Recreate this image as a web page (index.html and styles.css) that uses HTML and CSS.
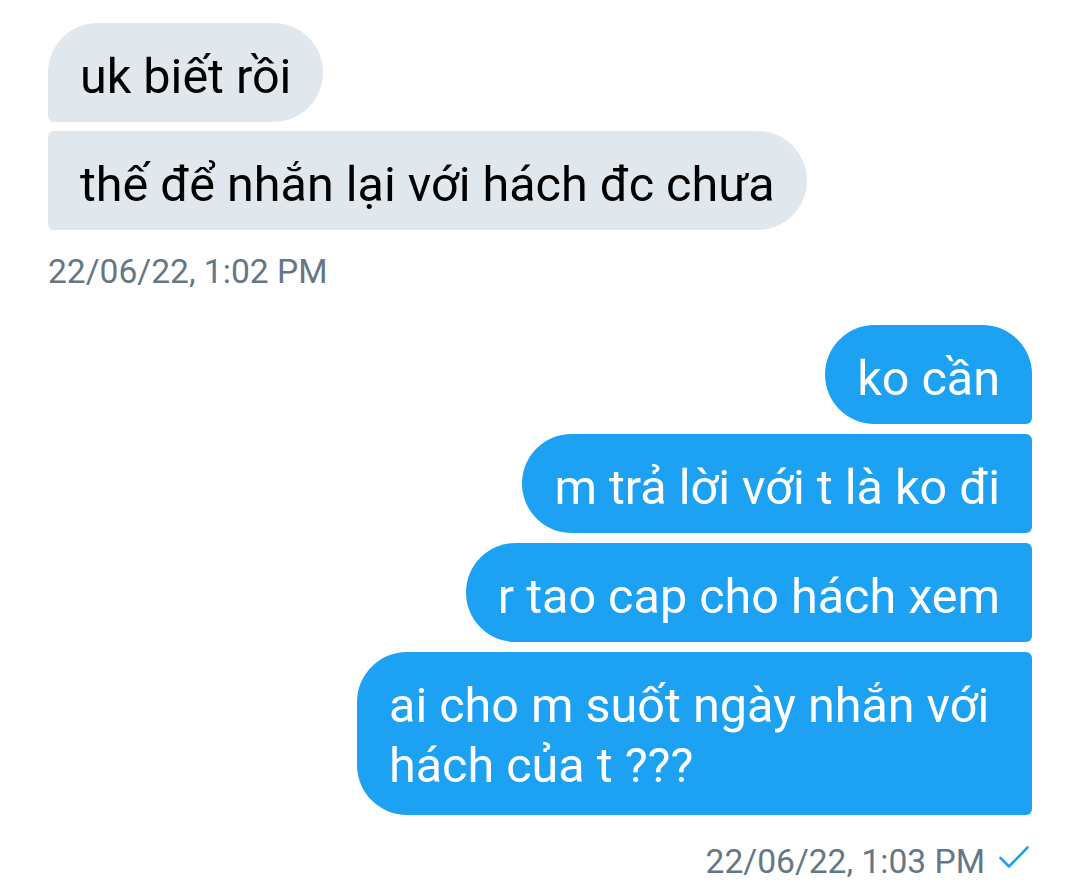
FILE: index.html
```html
<!DOCTYPE html>
<html lang="vi">
<head>
<meta charset="utf-8">
<link rel="stylesheet" href="styles.css">
</head>
<body>
<div class="chat">
  <div class="group group-in">
    <div class="bubble in first">uk biết rồi</div>
    <div class="bubble in last">thế để nhắn lại với hách đc chưa</div>
    <div class="stamp stamp-in">22/06/22, 1:02 PM</div>
  </div>
  <div class="group group-out">
    <div class="bubble out first">ko cần</div>
    <div class="bubble out mid">m trả lời với t là ko đi</div>
    <div class="bubble out mid">r tao cap cho hách xem</div>
    <div class="bubble out last wide">ai cho m suốt ngày nhắn với hách của t ???</div>
    <div class="stamp stamp-out">22/06/22, 1:03 PM
      <svg class="check" viewBox="0 0 33 22" width="33" height="22"><path d="M1.5 12L10 20.5L28.5 1.5" fill="none" stroke="#1da1f2" stroke-width="2.6" stroke-linecap="round" stroke-linejoin="round"/></svg>
    </div>
  </div>
</div>
</body>
</html>
```
FILE: styles.css
```css
html, body {
  margin: 0;
  padding: 0;
  background: #ffffff;
}
body {
  font-family: Roboto, "Noto Sans", sans-serif;
  width: 1080px;
  height: 892px;
  overflow: hidden;
}
.chat {
  padding: 23px 48px 0 48px;
  display: flex;
  flex-direction: column;
}
.group {
  display: flex;
  flex-direction: column;
}
.group-in {
  align-items: flex-start;
  gap: 9px;
}
.group-out {
  align-items: flex-end;
  gap: 10px;
  margin-top: 34px;
}
.bubble {
  font-size: 48.5px;
  line-height: 60px;
  padding: 24px 32px 15px 32px;
  border-radius: 50px;
}
.in {
  background: #e1e8ed;
  color: #000;
}
.in.first { border-bottom-left-radius: 6px; }
.in.last { border-top-left-radius: 6px; border-bottom-left-radius: 6px; }
.out {
  background: #1da1f2;
  color: #fff;
}
.out.first { border-bottom-right-radius: 6px; }
.out.mid { border-top-right-radius: 6px; border-bottom-right-radius: 6px; }
.out.last { border-top-right-radius: 6px; border-bottom-right-radius: 6px; }
.wide {
  width: 611px;
  padding-bottom: 19px;
}
.stamp {
  font-size: 33.6px;
  color: #657786;
  display: flex;
  align-items: center;
  gap: 14px;
}
.stamp-in { margin-top: 13px; }
.stamp-out { margin-top: 17px; }
.check {
  display: block;
  margin-bottom: 10px;
}
```
